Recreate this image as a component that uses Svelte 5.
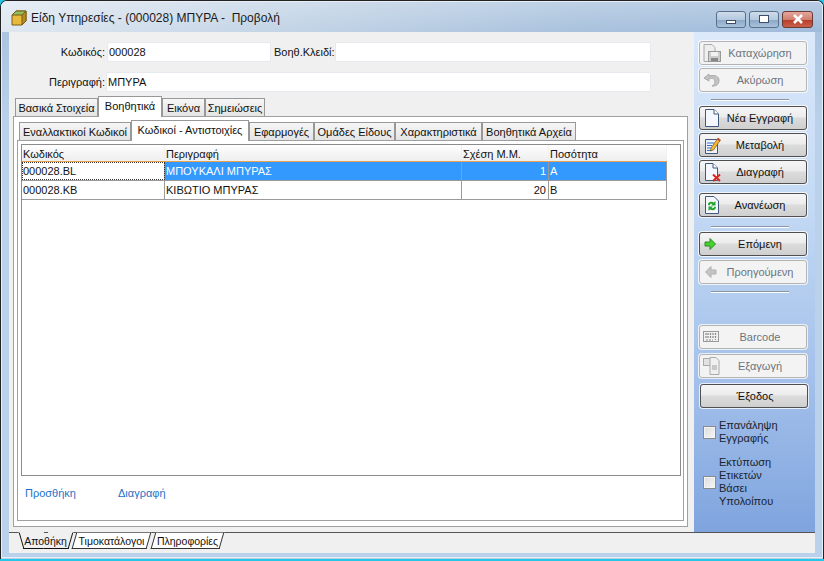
<script>
  const topTabs = [
    { label: "Βασικά Στοιχεία", w: 83 },
    { label: "Βοηθητικά", w: 64, active: true },
    { label: "Εικόνα", w: 43 },
    { label: "Σημειώσεις", w: 60 }
  ];
  const subTabs = [
    { label: "Εναλλακτικοί Κωδικοί", w: 112 },
    { label: "Κωδικοί - Αντιστοιχίες", w: 118, active: true },
    { label: "Εφαρμογές", w: 65 },
    { label: "Ομάδες Είδους", w: 81 },
    { label: "Χαρακτηριστικά", w: 87 },
    { label: "Βοηθητικά Αρχεία", w: 94 }
  ];
  const rows = [
    { code: "000028.BL", desc: "ΜΠΟΥΚΑΛΙ ΜΠΥΡΑΣ", rel: 1, qty: "A", selected: true },
    { code: "000028.KB", desc: "ΚΙΒΩΤΙΟ ΜΠΥΡΑΣ", rel: 20, qty: "B" }
  ];
</script>

<div class="window">
  <header class="titlebar">
    <svg class="appicon" width="16" height="16" viewBox="0 0 16 16">
      <path d="M1 5 L5 1 H15 V11 L11 15 H1 Z" fill="#e9b93e" stroke="#7a5a12" />
      <path d="M1 5 L5 1 H15 L11 5 Z" fill="#8fbf5a" stroke="#7a5a12" />
      <path d="M11 5 V15 L15 11 V1 Z" fill="#b98a20" stroke="#7a5a12" />
    </svg>
    <span class="title">Είδη Υπηρεσίες - (000028) ΜΠΥΡΑ -  Προβολή</span>
    <div class="winbtns">
      <div class="winbtn"><i class="min"></i></div>
      <div class="winbtn"><i class="max"></i></div>
      <div class="winbtn close">
        <svg width="12" height="10" viewBox="0 0 12 10"><path d="M2 1 L10 9 M10 1 L2 9" stroke="#fff" stroke-width="2.6" /></svg>
      </div>
    </div>
  </header>

  <div class="client">
    <main class="main">
      <div class="form-row first">
        <label class="lbl" for="code">Κωδικός:</label>
        <input id="code" class="code" value="000028" />
        <label class="lbl2" for="key">Βοηθ.Κλειδί:</label>
        <input id="key" class="key" />
      </div>
      <div class="form-row second">
        <label class="lbl" for="desc">Περιγραφή:</label>
        <input id="desc" class="desc" value="ΜΠΥΡΑ" />
      </div>

      <div class="tabs top">
        {#each topTabs as t}
          <div class="tab" class:active={t.active} style="width:{t.w}px">{t.label}</div>
        {/each}
      </div>
      <section class="panel">
        <div class="tabs sub">
          {#each subTabs as t}
            <div class="tab" class:active={t.active} style="width:{t.w}px">{t.label}</div>
          {/each}
        </div>
        <div class="subpanel">
          <div class="grid">
            <div class="g-row head">
              <div class="c1">Κωδικός</div>
              <div class="c2">Περιγραφή</div>
              <div class="c3">Σχέση Μ.Μ.</div>
              <div class="c4">Ποσότητα</div>
            </div>
            {#each rows as r}
              <div class="g-row" class:selected={r.selected}>
                <div class="c1">{r.code}</div>
                <div class="c2">{r.desc}</div>
                <div class="c3 num">{r.rel}</div>
                <div class="c4">{r.qty}</div>
              </div>
            {/each}
          </div>
          <div class="links">
            <a href="#add">Προσθήκη</a>
            <a href="#del">Διαγραφή</a>
          </div>
        </div>
      </section>
    </main>

    <aside class="side">
      <button class="btn off">
        <svg width="20" height="20" viewBox="0 0 20 20"><path d="M2 1.5 H10 L13 4.5 V18.5 H2 Z" fill="#eee" stroke="#aaa" /><rect x="6.5" y="8.5" width="12" height="10" fill="#ccc" stroke="#999" /><rect x="9" y="9" width="7" height="4" fill="#f2f2f2" /><rect x="9" y="15" width="7" height="3" fill="#888" /></svg>
        <span>Καταχώρηση</span>
      </button>
      <button class="btn off">
        <svg width="20" height="20" viewBox="0 0 20 20"><path d="M7 4 L2 8 L7 11 V8.5 C11 7.5 13 9 13 12 C13 14 11.5 15.5 10 16 C14 16.5 17 14 17 10.5 C17 6.5 13 4.5 7 6 Z" fill="#c4c4c4" stroke="#aaa" /></svg>
        <span>Ακύρωση</span>
      </button>
      <hr />
      <button class="btn">
        <svg width="20" height="20" viewBox="0 0 20 20"><path d="M3.5 1.5 H12 L16.5 6 V18.5 H3.5 Z" fill="#f4f8fe" stroke="#43597c" /><path d="M12 1.5 V6 H16.5" fill="#fff" stroke="#43597c" /></svg>
        <span>Νέα Εγγραφή</span>
      </button>
      <button class="btn">
        <svg width="20" height="20" viewBox="0 0 20 20"><path d="M3.5 4.5 H15.5 V18.5 H3.5 Z" fill="#eef3fb" stroke="#43597c" /><path d="M5 8 H12 M5 10.5 H10 M5 13 H9 M5 15.5 H10" stroke="#2f6fd0" /><path d="M9 13 L16 3 L18.5 5 L11.5 15 L8.5 16 Z" fill="#f2b632" stroke="#7a5a12" stroke-width=".7" /><path d="M16 3 L18.5 5 L17.5 6.5 L15 4.5 Z" fill="#d9433a" /></svg>
        <span>Μεταβολή</span>
      </button>
      <button class="btn">
        <svg width="20" height="20" viewBox="0 0 20 20"><path d="M3.5 1.5 H11 L15.5 6 V18.5 H3.5 Z" fill="#f4f8fe" stroke="#43597c" /><path d="M11 1.5 V6 H15.5" fill="#fff" stroke="#43597c" /><path d="M11 12.5 L18 19 M18 12.5 L11 19" stroke="#d8261c" stroke-width="2" /></svg>
        <span>Διαγραφή</span>
      </button>
      <button class="btn refresh">
        <svg width="20" height="20" viewBox="0 0 20 20"><path d="M3.5 1.5 H12 L16.5 6 V18.5 H3.5 Z" fill="#f4f8fe" stroke="#43597c" /><path d="M6 10 C6 7 9 6 12 7.5 L13.5 6 V10.5 H9 L10.5 9 C9 8.5 8 9 7.5 10.5 Z" fill="#1fa52a" /><path d="M14 12 C14 15 11 16 8 14.5 L6.5 16 V11.5 H11 L9.5 13 C11 13.5 12 13 12.5 11.5 Z" fill="#1fa52a" /></svg>
        <span>Ανανέωση</span>
      </button>
      <hr class="sep2" />
      <button class="btn next">
        <svg width="20" height="20" viewBox="0 0 20 20"><path d="M3 8 H8 V4.5 L13.5 10 L8 15.5 V12 H3 Z" fill="#45d12e" stroke="#2b8a22" /></svg>
        <span>Επόμενη</span>
      </button>
      <button class="btn off">
        <svg width="20" height="20" viewBox="0 0 20 20"><path d="M14 8 H9 V4.5 L3.5 10 L9 15.5 V12 H14 Z" fill="#c4c4c4" stroke="#b0b0b0" /></svg>
        <span>Προηγούμενη</span>
      </button>
      <hr class="sep3" />
      <button class="btn off barcode">
        <svg width="20" height="20" viewBox="0 0 20 20"><rect x="1.5" y="4.5" width="15" height="10" fill="#f2f2f2" stroke="#999" /><path d="M4 6 V11 M6 6 V11 M8.5 6 V11 M11 6 V11 M13.5 6 V13 M4 13 H11" stroke="#888" stroke-width="1.2" stroke-dasharray="2 1" /></svg>
        <span>Barcode</span>
      </button>
      <button class="btn off export">
        <svg width="20" height="20" viewBox="0 0 20 20"><rect x="1.5" y="2.5" width="8" height="7" fill="#e2e2e2" stroke="#aaa" /><path d="M8 1.5 H14 L17 4.5 V18.5 H8 Z" fill="#f0f0f0" stroke="#aaa" /><rect x="10" y="9" width="5" height="5" fill="#c8c8c8" /></svg>
        <span>Εξαγωγή</span>
      </button>
      <button class="btn exit"><span>Έξοδος</span></button>

      <div class="check c-one">
        <i class="box"></i>
        <span>Επανάληψη<br />Εγγραφής</span>
      </div>
      <div class="check c-two">
        <i class="box"></i>
        <span>Εκτύπωση<br />Ετικετών<br />Βάσει<br />Υπολοίπου</span>
      </div>
    </aside>
  </div>

  <footer class="strip">
    <div class="wtab active" style="width:47px"><span>Αποθήκη</span></div>
    <div class="wtab" style="width:75px"><span>Τιμοκατάλογοι</span></div>
    <div class="wtab" style="width:69px"><span>Πληροφορίες</span></div>
  </footer>
</div>

<style>
  :global(body) {
    margin: 0;
    background: #26c6e6;
  }
  * {
    box-sizing: border-box;
  }
  .window {
    width: 824px;
    height: 559px;
    display: flex;
    flex-direction: column;
    overflow: hidden;
    border: 1px solid #222;
    border-bottom: 0;
    border-radius: 7px 7px 0 0;
    outline: 1px solid #e8eef5;
    outline-offset: -2px;
    background: linear-gradient(180deg, #a6c0dc 0, #b9d1ea 120px);
    font-family: "Liberation Sans", "DejaVu Sans", sans-serif;
    font-size: 11px;
    color: #111;
  }
  .titlebar {
    height: 31px;
    flex: none;
    display: flex;
    align-items: center;
    padding: 2px 6px 0 10px;
    background: linear-gradient(180deg, rgba(255, 255, 255, .25), rgba(255, 255, 255, 0)), linear-gradient(90deg, #dfe8f1 0, #c6d6e7 30%, #a9c2dd 70%, #a0bcdb 100%);
  }
  .appicon {
    flex: none;
  }
  .title {
    margin-left: 4px;
    font-size: 12px;
    white-space: pre;
    color: #1a1a1a;
  }
  .winbtns {
    margin-left: auto;
    margin-right: 4px;
    margin-top: 3px;
    display: flex;
    gap: 3px;
  }
  .winbtn {
    width: 30px;
    height: 17px;
    border: 1px solid #5a6f88;
    border-radius: 3px;
    display: flex;
    align-items: center;
    justify-content: center;
    background: linear-gradient(180deg, #cfdceb 0, #b4c8de 50%, #8aa6c6 51%, #a9c2dc 100%);
  }
  .winbtn.close {
    width: 31px;
    border-color: #6b3a34;
    background: linear-gradient(180deg, #e4a79c 0, #d08070 50%, #b83b27 51%, #c9604c 100%);
  }
  .winbtn i {
    display: block;
    background: #fff;
    border: 1px solid #3c4f66;
  }
  .min {
    width: 10px;
    height: 4px;
    margin-top: 5px;
  }
  .max {
    width: 10px;
    height: 8px;
  }
  .client {
    height: 500px;
    flex: none;
    margin: 0 8px;
    display: flex;
    background: #f0f0f0;
  }
  .main {
    width: 685px;
    flex: none;
  }
  .form-row {
    display: flex;
    align-items: center;
  }
  .form-row.first {
    padding-top: 10px;
  }
  .form-row.second {
    padding-top: 10px;
  }
  .lbl {
    width: 96px;
    text-align: right;
    flex: none;
  }
  .lbl2 {
    width: 61px;
    margin-left: 3px;
    flex: none;
  }
  input {
    height: 20px;
    border: 1px solid #e6e9ee;
    border-radius: 2px;
    background: #fff;
    padding: 0 1px;
    font: inherit;
    color: #111;
    outline: none;
  }
  .code {
    width: 164px;
    margin-left: 2px;
  }
  .key {
    width: 316px;
  }
  .desc {
    width: 545px;
    margin-left: 1px;
  }
  .tabs {
    display: flex;
    align-items: flex-end;
    position: relative;
    z-index: 1;
  }
  .tabs.top {
    margin: 3px 0 0 6px;
    height: 21px;
  }
  .tabs.sub {
    margin: 2px 0 0 5px;
    height: 21px;
  }
  .tab {
    height: 18px;
    border: 1px solid #989898;
    border-bottom: 0;
    background: linear-gradient(180deg, #f6f6f6, #e4e4e4);
    display: flex;
    align-items: center;
    justify-content: center;
    white-space: nowrap;
  }
  .tab.active {
    height: 21px;
    padding-bottom: 3px;
    background: #fff;
    margin-bottom: -1px;
  }
  .panel {
    margin-left: 4px;
    width: 675px;
    height: 411px;
    border: 1px solid #a0a0a0;
    background: #fff;
  }
  .subpanel {
    margin-left: 3px;
    width: 667px;
    height: 381px;
    border: 1px solid #a0a0a0;
    border-top-color: #a0a0a0;
    background: #fff;
    padding-top: 3px;
  }
  .grid {
    margin-left: 3px;
    width: 660px;
    height: 332px;
    border: 1px solid #8c8c8c;
    background: #fff;
  }
  .g-row {
    display: flex;
    width: 645px;
    height: 19px;
    border-bottom: 1px solid #9a9a9a;
    line-height: 18px;
  }
  .g-row > div {
    padding-left: 1px;
    border-right: 1px solid #9a9a9a;
    white-space: nowrap;
  }
  .g-row.head {
    height: 17px;
    line-height: 18px;
    background: linear-gradient(180deg, #fff 0, #f7f7f7 40%, #eeeeee 100%);
    border-bottom: 1px solid #e9a24c;
  }
  .g-row.head > div {
    border-right: 1px solid #f0f0f0;
    padding-left: 1px;
  }
  .c1 {
    width: 143px;
  }
  .c2 {
    width: 297px;
  }
  .c3 {
    width: 87px;
  }
  .c4 {
    width: 118px;
  }
  .num {
    text-align: right;
    padding-right: 2px;
  }
  .g-row.selected .c1 {
    outline: 1px dotted #333;
    outline-offset: -1px;
  }
  .g-row.selected .c2,
  .g-row.selected .c3,
  .g-row.selected .c4 {
    background: #3399ff;
    color: #fff;
  }
  .links {
    display: flex;
    padding: 11px 0 0 7px;
  }
  .links a {
    width: 93px;
    color: #1e72c8;
    text-decoration: none;
  }
  .side {
    width: 121px;
    flex: none;
    padding: 9px 0 0 5px;
    display: flex;
    flex-direction: column;
    align-items: flex-start;
    background: linear-gradient(180deg, #dbe9fb 0, #c3d9f4 35%, #a3c0ea 70%, #7fa4de 100%);
  }
  .btn {
    width: 108px;
    height: 24px;
    margin: 0 0 3px 0;
    padding: 0 0 0 2px;
    border: 1px solid #4f4f4f;
    border-radius: 3px;
    box-shadow: 0 0 0 1px rgba(255, 255, 255, .75);
    background: linear-gradient(180deg, #f6f6f6 0, #ececec 45%, #dcdcdc 50%, #cfcfcf 100%);
    display: flex;
    align-items: center;
    font: inherit;
    color: #111;
    font-size: 11px;
  }
  .btn svg {
    flex: none;
  }
  .btn span {
    flex: 1;
    text-align: center;
    padding-right: 8px;
  }
  .btn.off {
    border-color: #b4b4b4;
    color: #6d7480;
    background: #f3f3f3;
  }
  .btn.next {
    margin-bottom: 4px;
  }
  hr {
    width: 78px;
    height: 2px;
    margin: 4px 0 5px 12px;
    border: 0;
    background: linear-gradient(180deg, #8a96a6 50%, #fff 50%);
  }
  .refresh {
    margin-top: 6px;
  }
  hr.sep2 {
    margin: 6px 0 4px 12px;
  }
  hr.sep3 {
    margin: 4px 0 0 12px;
  }
  .barcode {
    margin-top: 32px;
    margin-bottom: 5px;
  }
  .export {
    margin-bottom: 6px;
  }
  .exit {
    width: 108px;
    margin-left: 1px;
  }
  .exit span {
    padding: 0 0 0 0;
  }
  .check {
    display: flex;
    align-items: center;
    margin-left: 4px;
    line-height: 13px;
    font-size: 11px;
    color: #1a2430;
  }
  .c-one {
    margin-top: 8px;
  }
  .c-two {
    margin-top: 11px;
  }
  .box {
    display: block;
    flex: none;
    width: 13px;
    height: 13px;
    margin-right: 3px;
    border: 1px solid #8a8a8a;
    background: linear-gradient(135deg, #dcdcdc, #f6f6f6);
    box-shadow: inset 0 0 0 1px #f4f4f4;
  }
  .strip {
    flex: none;
    height: 21px;
    margin: 0 8px;
    padding: 0 0 0 13px;
    display: flex;
    align-items: flex-start;
    border-top: 1px solid #555;
    background: #f0f0f0;
    font-size: 10.5px;
  }
  .wtab {
    position: relative;
    height: 17px;
    margin-right: 4px;
    margin-top: -1px;
    line-height: 18px;
    white-space: nowrap;
    z-index: 0;
    display: flex;
    justify-content: center;
  }
  .wtab span {
    position: relative;
    z-index: 1;
  }
  .wtab::before {
    content: "";
    position: absolute;
    inset: 0;
    border: 1px solid #333;
    border-top-color: #777;
    transform: skewX(-16deg);
    background: #fff;
  }
  .wtab.active {
    margin-right: 5px;
    z-index: 2;
  }
  .wtab.active::before,
  .wtab.active::after {
    content: "";
    position: absolute;
    top: 0;
    bottom: 0;
    background: #f0f0f0;
    border: 1px solid #111;
    border-top-color: #f0f0f0;
  }
  .wtab.active::before {
    left: -1px;
    right: 50%;
    border-right: 0;
    transform: skewX(16deg);
  }
  .wtab.active::after {
    right: -1px;
    left: 50%;
    border-left: 0;
    transform: skewX(-16deg);
  }
</style>
